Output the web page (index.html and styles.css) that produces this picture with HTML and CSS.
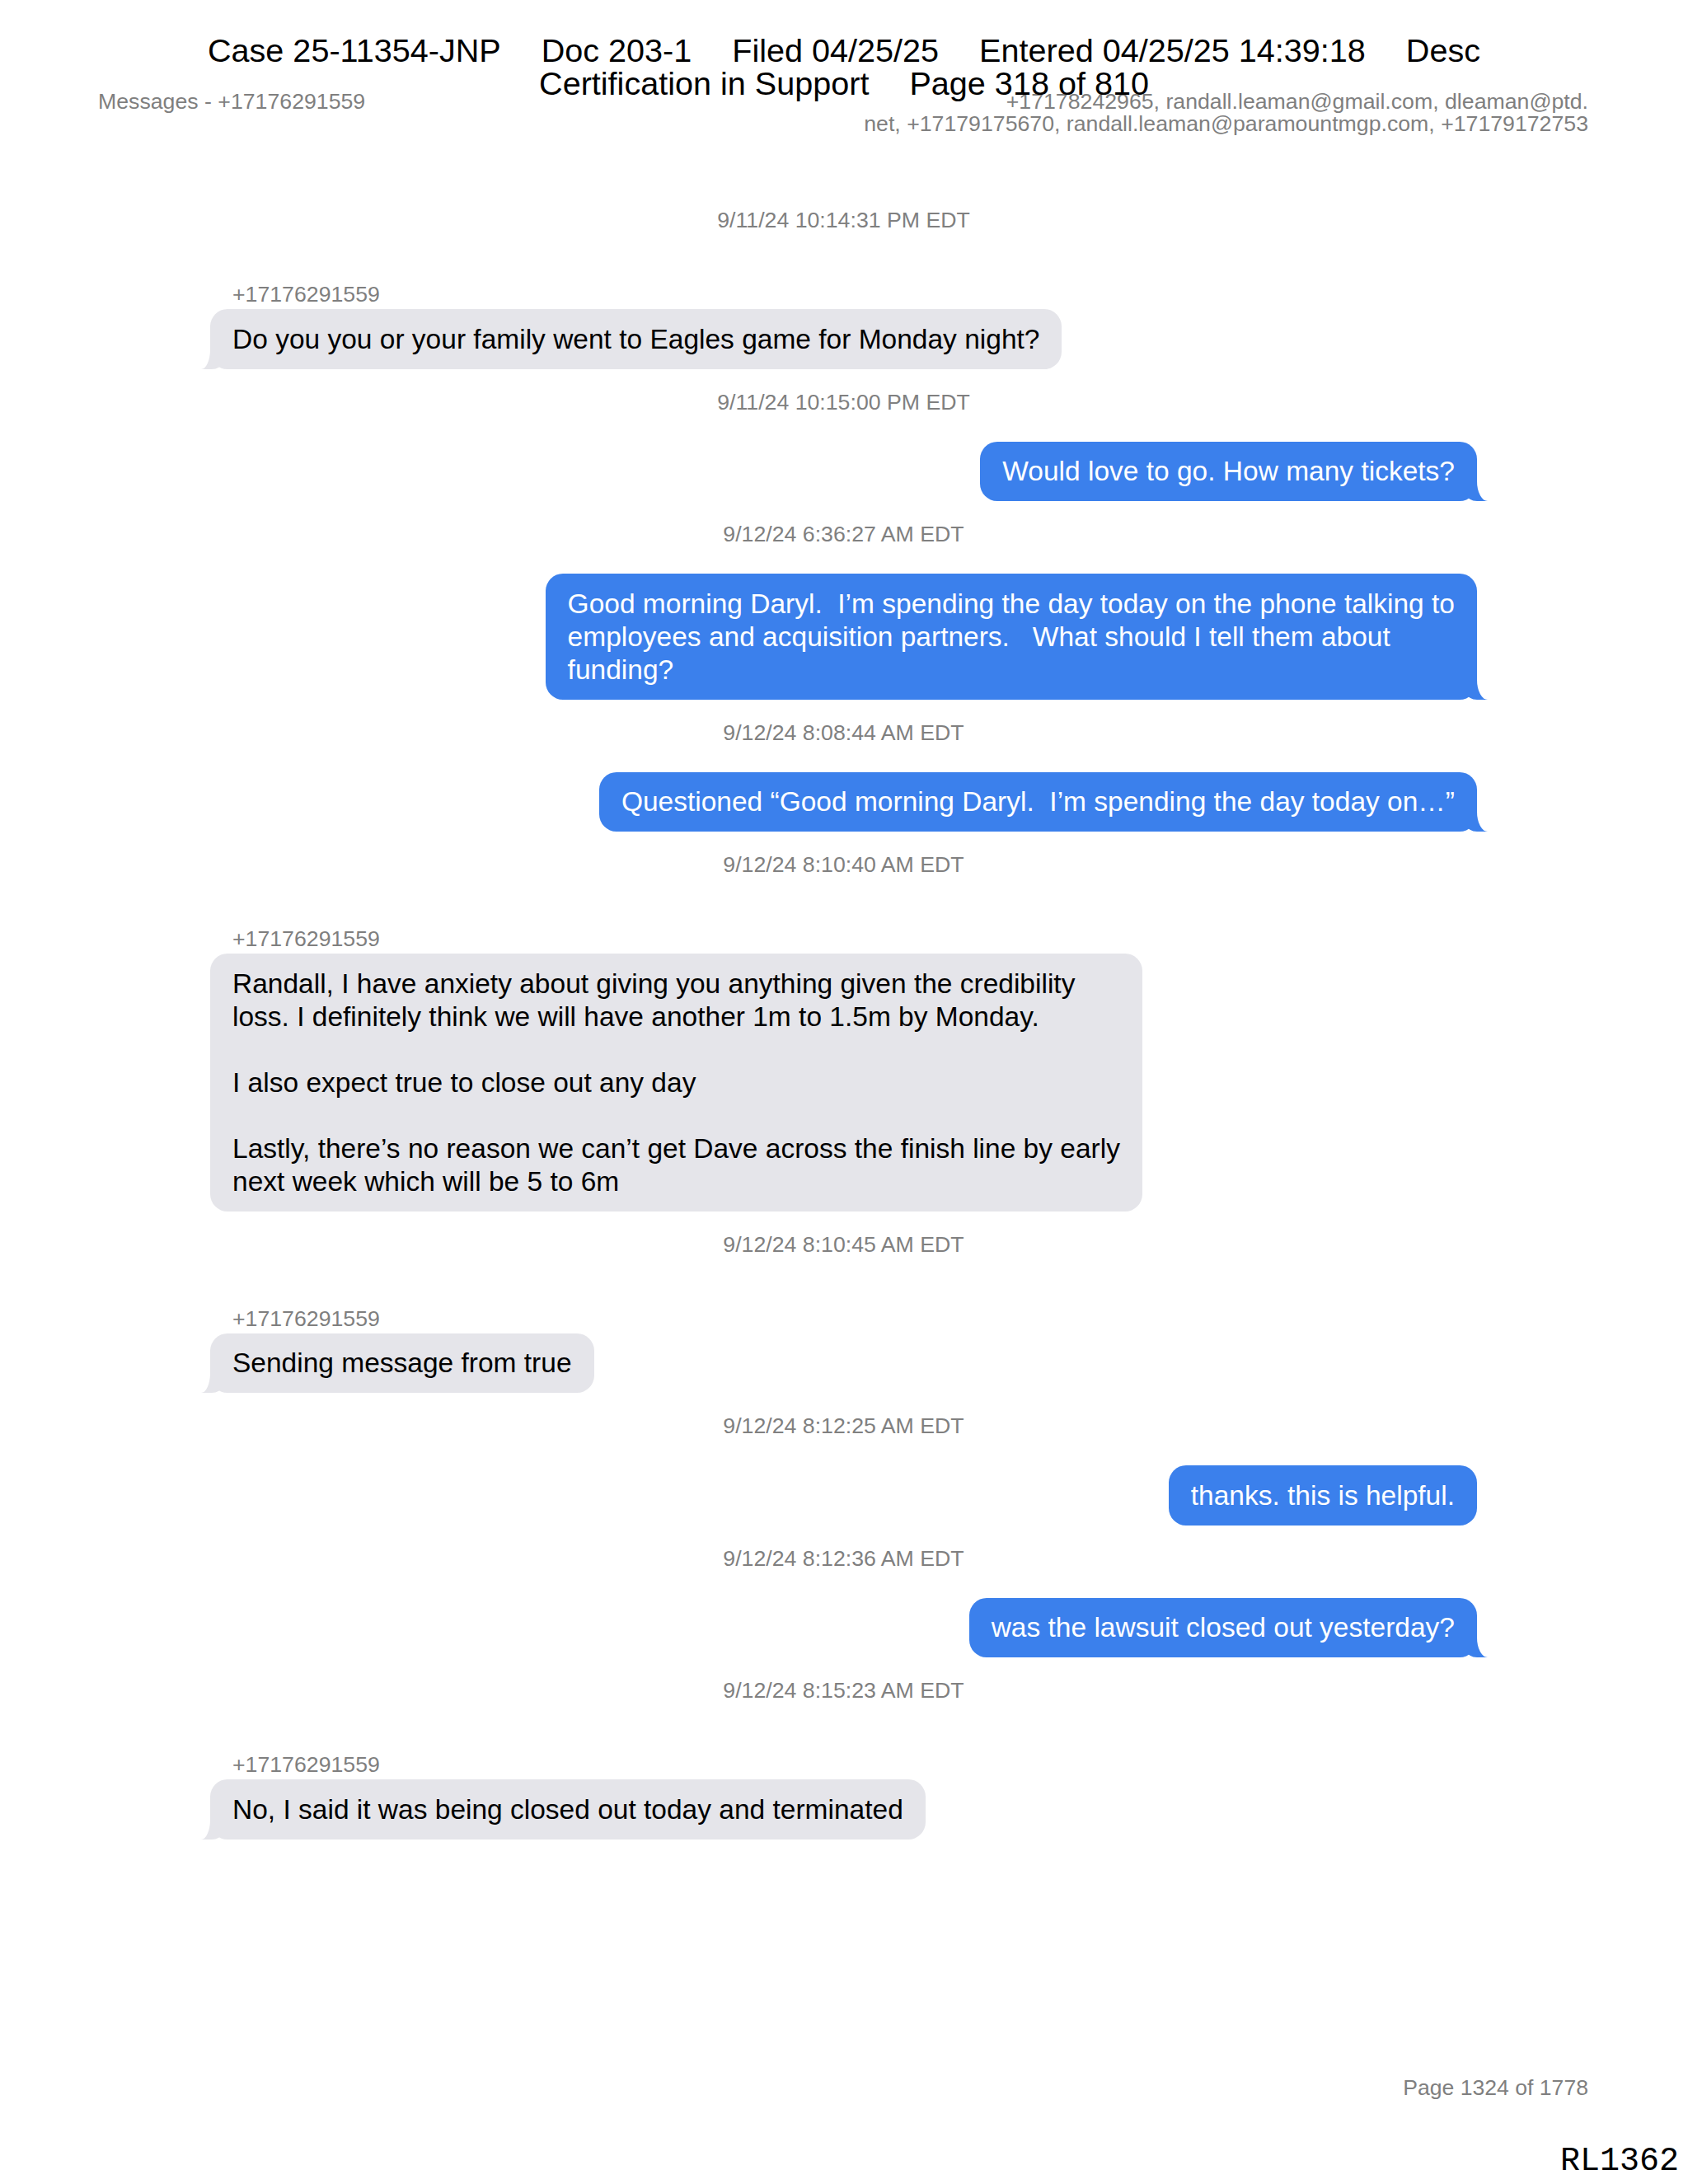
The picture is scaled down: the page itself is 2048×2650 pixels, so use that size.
FILE: index.html
```html
<!DOCTYPE html>
<html lang="en">
<head>
<meta charset="utf-8">
<title>Messages - +17176291559</title>
<link rel="stylesheet" href="styles.css">
</head>
<body>
<div class="page">
  <div class="stamp">
    <div class="stamp-line"><span>Case 25-11354-JNP</span><span>Doc 203-1</span><span>Filed 04/25/25</span><span>Entered 04/25/25 14:39:18</span><span>Desc</span></div>
    <div class="stamp-line"><span>Certification in Support</span><span>Page 318 of 810</span></div>
  </div>

  <div class="meta-row">
    <div class="meta-left">Messages - +17176291559</div>
    <div class="meta-right">+17178242965, randall.leaman@gmail.com, dleaman@ptd.<br>net, +17179175670, randall.leaman@paramountmgp.com, +17179172753</div>
  </div>

  <div class="thread">
    <div class="ts">9/11/24 10:14:31 PM EDT</div>
    <div class="msg recv">
      <div class="sender">+17176291559</div>
      <div class="bubble tail">Do you you or your family went to Eagles game for Monday night?</div>
    </div>

    <div class="ts">9/11/24 10:15:00 PM EDT</div>
    <div class="msg sent">
      <div class="bubble tail">Would love to go. How many tickets?</div>
    </div>

    <div class="ts">9/12/24 6:36:27 AM EDT</div>
    <div class="msg sent">
      <div class="bubble tail">Good morning Daryl.  I’m spending the day today on the phone talking to<br>employees and acquisition partners.   What should I tell them about<br>funding?</div>
    </div>

    <div class="ts">9/12/24 8:08:44 AM EDT</div>
    <div class="msg sent">
      <div class="bubble tail">Questioned “Good morning Daryl.  I’m spending the day today on…”</div>
    </div>

    <div class="ts">9/12/24 8:10:40 AM EDT</div>
    <div class="msg recv">
      <div class="sender">+17176291559</div>
      <div class="bubble">Randall, I have anxiety about giving you anything given the credibility<br>loss. I definitely think we will have another 1m to 1.5m by Monday.<br><br>I also expect true to close out any day<br><br>Lastly, there’s no reason we can’t get Dave across the finish line by early<br>next week which will be 5 to 6m</div>
    </div>

    <div class="ts">9/12/24 8:10:45 AM EDT</div>
    <div class="msg recv">
      <div class="sender">+17176291559</div>
      <div class="bubble tail">Sending message from true</div>
    </div>

    <div class="ts">9/12/24 8:12:25 AM EDT</div>
    <div class="msg sent">
      <div class="bubble">thanks. this is helpful.</div>
    </div>

    <div class="ts">9/12/24 8:12:36 AM EDT</div>
    <div class="msg sent">
      <div class="bubble tail">was the lawsuit closed out yesterday?</div>
    </div>

    <div class="ts">9/12/24 8:15:23 AM EDT</div>
    <div class="msg recv">
      <div class="sender">+17176291559</div>
      <div class="bubble tail">No, I said it was being closed out today and terminated</div>
    </div>
  </div>

  <div class="page-footer">Page 1324 of 1778</div>
  <div class="bates">RL1362</div>
</div>
</body>
</html>
```

FILE: styles.css
```css
* {
  box-sizing: border-box;
}

html, body {
  margin: 0;
  padding: 0;
  background: #ffffff;
}

body {
  font-family: "Liberation Sans", Arial, Helvetica, sans-serif;
  color: #000000;
}

.page {
  position: relative;
  width: 2048px;
  height: 2650px;
  display: flex;
  flex-direction: column;
  padding: 0 121px 7px 119px;
  overflow: hidden;
}

/* Court filing stamp overlaid on top of the page */
.stamp {
  position: absolute;
  top: 41px;
  left: 0;
  right: 0;
  font-size: 39.6px;
  line-height: 40px;
  color: #000000;
}

.stamp-line {
  display: flex;
  justify-content: center;
  gap: 49px;
  white-space: nowrap;
}

.meta-row {
  margin-top: 110px;
  display: flex;
  justify-content: space-between;
  align-items: flex-start;
  font-size: 26.7px;
  line-height: 26.6px;
  color: #7f7f7f;
}

.meta-right {
  text-align: right;
  white-space: nowrap;
}

.thread {
  margin: 84px 135px 0 136px;
  display: flex;
  flex-direction: column;
}

.ts {
  font-size: 26.7px;
  line-height: 40px;
  text-align: center;
  color: #808080;
  margin-top: 20px;
  margin-bottom: 28px;
}

.ts:first-child {
  margin-top: 0;
}

.msg {
  display: flex;
  flex-direction: column;
}

.msg.recv {
  align-items: flex-start;
  margin-top: 27px;
}

.msg.sent {
  align-items: flex-end;
}

.sender {
  font-size: 26.7px;
  line-height: 30px;
  color: #7f7f7f;
  padding-left: 27px;
  margin-bottom: 3px;
}

.bubble {
  position: relative;
  font-size: 33.5px;
  line-height: 40px;
  padding: 16.5px 27px 16px 27px;
  border-radius: 21px;
  white-space: pre;
}

.recv .bubble {
  background: #e5e5ea;
  color: #000000;
}

.sent .bubble {
  background: #3b80ec;
  color: #ffffff;
}

/* iMessage-style tails */
.bubble.tail::before,
.bubble.tail::after {
  content: "";
  position: absolute;
  bottom: 0;
  height: 30px;
}

.bubble.tail::before {
  width: 25px;
  background: inherit;
}

.bubble.tail::after {
  width: 20px;
  background: #ffffff;
}

.sent .bubble.tail::before {
  right: -13px;
  border-bottom-left-radius: 12px 8px;
}

.sent .bubble.tail::after {
  right: -20px;
  border-bottom-left-radius: 13px 24px;
}

.recv .bubble.tail::before {
  left: -11px;
  border-bottom-right-radius: 12px 8px;
}

.recv .bubble.tail::after {
  left: -20px;
  border-bottom-right-radius: 11px 24px;
}

.page-footer {
  margin-top: auto;
  text-align: right;
  font-size: 26.6px;
  line-height: 26.6px;
  color: #7f7f7f;
}

.bates {
  margin-top: 56px;
  margin-right: -110px;
  text-align: right;
  font-family: "Liberation Mono", "Courier New", monospace;
  font-size: 40px;
  line-height: 40px;
  color: #000000;
}
```
